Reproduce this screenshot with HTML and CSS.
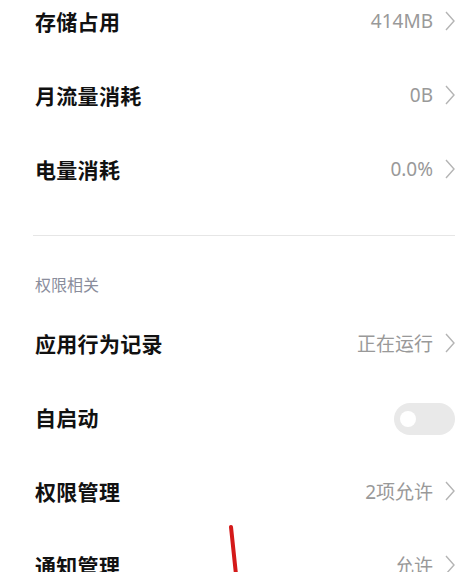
FILE: index.html
```html
<!DOCTYPE html>
<html lang="zh-CN">
<head>
<meta charset="utf-8">
<link rel="stylesheet" href="styles.css">
</head>
<body>
<div class="page">
  <div class="list first">
    <div class="row"><span class="title">存储占用</span><span class="value">414MB<svg class="chev" viewBox="0 0 10 20"><polyline points="1,1 9,10 1,19"/></svg></span></div>
    <div class="row"><span class="title">月流量消耗</span><span class="value">0B<svg class="chev" viewBox="0 0 10 20"><polyline points="1,1 9,10 1,19"/></svg></span></div>
    <div class="row"><span class="title">电量消耗</span><span class="value">0.0%<svg class="chev" viewBox="0 0 10 20"><polyline points="1,1 9,10 1,19"/></svg></span></div>
  </div>
  <div class="divider"></div>
  <div class="section">权限相关</div>
  <div class="list second">
    <div class="row"><span class="title">应用行为记录</span><span class="value">正在运行<svg class="chev" viewBox="0 0 10 20"><polyline points="1,1 9,10 1,19"/></svg></span></div>
    <div class="row"><span class="title">自启动</span><span class="toggle"><span class="knob"></span></span></div>
    <div class="row"><span class="title">权限管理</span><span class="value">2项允许<svg class="chev" viewBox="0 0 10 20"><polyline points="1,1 9,10 1,19"/></svg></span></div>
    <div class="row"><span class="title">通知管理</span><span class="value">允许<svg class="chev" viewBox="0 0 10 20"><polyline points="1,1 9,10 1,19"/></svg></span></div>
  </div>
  <svg class="mark" width="20" height="60" viewBox="0 0 20 60"><line x1="5" y1="3" x2="11" y2="60"/></svg>
</div>
</body>
</html>
```
FILE: styles.css
```css
html, body {
  margin: 0;
  padding: 0;
  background: #ffffff;
  overflow: hidden;
}
.page {
  position: relative;
  width: 474px;
  height: 572px;
  overflow: hidden;
  padding: 0 19px 0 35px;
  box-sizing: border-box;
  font-family: "Noto Sans", "Noto Sans CJK SC", sans-serif;
}
.list.first {
  margin-top: -14px;
}
.row {
  height: 74px;
  display: flex;
  align-items: center;
  justify-content: space-between;
}
.title {
  font-family: "Noto Sans CJK SC", sans-serif;
  font-weight: 700;
  font-size: 21px;
  color: #111111;
  letter-spacing: 0.3px;
  padding-bottom: 4px;
}
.value {
  display: flex;
  align-items: center;
  font-size: 19px;
  color: #999999;
  font-weight: 400;
  padding-bottom: 4px;
}
.chev {
  width: 10px;
  height: 20px;
  margin-left: 12px;
  fill: none;
  stroke: #b4b4b4;
  stroke-width: 1.4;
}
.divider {
  margin: 27px 0 0 -2px;
  height: 1px;
  background: #e6e6e6;
}
.section {
  margin-top: 37px;
  height: 22px;
  line-height: 22px;
  font-family: "Noto Sans CJK SC", sans-serif;
  font-size: 16px;
  color: #8a8d9c;
}
.list.second {
  margin-top: 13px;
}
.toggle {
  width: 61px;
  height: 32px;
  border-radius: 16px;
  background: #e9e9e9;
  display: flex;
  align-items: center;
  padding-left: 6px;
  box-sizing: border-box;
}
.knob {
  width: 16px;
  height: 16px;
  border-radius: 50%;
  background: #ffffff;
}
.mark {
  position: absolute;
  left: 226px;
  top: 524px;
}
.mark line {
  stroke: #d41a1a;
  stroke-width: 4;
  stroke-linecap: round;
}
```
